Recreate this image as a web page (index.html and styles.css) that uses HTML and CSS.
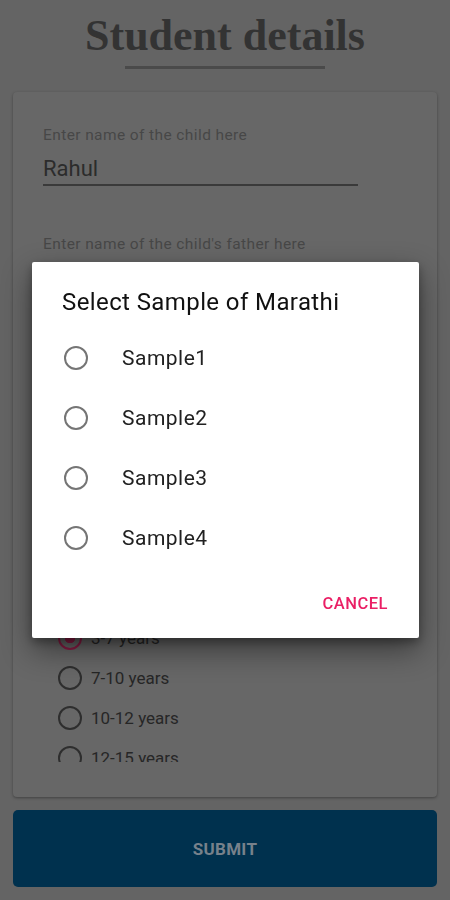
FILE: index.html
```html
<!DOCTYPE html>
<html lang="en">
<head>
    <meta charset="UTF-8">
    <meta name="viewport" content="width=device-width, initial-scale=1.0">
    <title>Student details</title>
    <link rel="stylesheet" href="styles.css">
</head>
<body>

    <div class="page">
        <h1 class="title">Student details</h1>
        <div class="title-line"></div>

        <div class="card">
            <div class="scroll">
                <div class="field">
                    <p class="hint">Enter name of the child here</p>
                    <div class="input">Rahul</div>
                </div>
                <div class="field">
                    <p class="hint">Enter name of the child's father here</p>
                    <div class="input"></div>
                </div>
                <!-- fields hidden behind the dialog -->
                <div class="field blank"><div class="input"></div></div>
                <div class="field blank"><div class="input"></div></div>
                <div class="group-gap"></div>
                <div class="age-list">
                    <div class="age selected"><span class="dot"></span>3-7 years</div>
                    <div class="age"><span class="dot"></span>7-10 years</div>
                    <div class="age"><span class="dot"></span>10-12 years</div>
                    <div class="age"><span class="dot"></span>12-15 years</div>
                </div>
            </div>
        </div>

        <button class="submit">SUBMIT</button>
    </div>

    <!-- sample picker dialog -->
    <div class="dialog">
        <h2 class="dialog-title">Select Sample of Marathi</h2>
        <div class="options">
            <div class="option"><span class="ring"></span>Sample1</div>
            <div class="option"><span class="ring"></span>Sample2</div>
            <div class="option"><span class="ring"></span>Sample3</div>
            <div class="option"><span class="ring"></span>Sample4</div>
        </div>
        <div class="dialog-actions">
            <button class="cancel">CANCEL</button>
        </div>
    </div>

</body>
</html>
```

FILE: styles.css
```css
body {
    margin: 0;
    background-color: #646464;
    font-family: 'Roboto', 'Noto Sans', sans-serif;
}
.page {
    padding: 0 13px;
    height: 900px;
    box-sizing: border-box;
}
.title {
    margin: 0;
    padding-top: 12px;
    height: 48px;
    text-align: center;
    font-family: 'Liberation Serif', serif;
    font-weight: bold;
    font-size: 44px;
    line-height: 48px;
    color: #333;
}
.title-line {
    width: 200px;
    height: 3px;
    margin: 6px auto 0;
    background-color: #4a4a4a;
}
.card {
    margin-top: 23px;
    padding: 35px 0 35px 30px;
    background-color: #676767;
    border-radius: 4px;
    box-shadow: 0 1px 3px rgba(0, 0, 0, 0.35);
}
.scroll {
    height: 635px;
    overflow: hidden;
}
.field {
    height: 109px;
}
.field.blank {
    padding-top: 16px;
    box-sizing: border-box;
}
.hint {
    margin: 0;
    font-size: 15.5px;
    letter-spacing: 0.4px;
    line-height: 16px;
    color: #474747;
}
.input {
    width: 315px;
    height: 26px;
    margin-top: 13px;
    padding-bottom: 2px;
    border-bottom: 2px solid #3a3a3a;
    font-size: 22px;
    line-height: 26px;
    color: #2c2c2c;
}
.group-gap {
    height: 55px;
}
.age {
    display: flex;
    align-items: center;
    height: 40px;
    margin-left: 15px;
    font-size: 17px;
    color: #262626;
}
.dot {
    width: 20px;
    height: 20px;
    margin-right: 9px;
    border: 2px solid #2e2e2e;
    border-radius: 50%;
}
.age.selected .dot {
    border-color: #8c1c45;
    background: radial-gradient(circle, #8c1c45 0 5px, transparent 5.5px);
}
.submit {
    display: block;
    width: 100%;
    height: 77px;
    margin-top: 13px;
    border: none;
    border-radius: 5px;
    background-color: #00314e;
    font-family: 'Roboto', sans-serif;
    font-weight: bold;
    font-size: 17px;
    letter-spacing: 0.3px;
    color: #77818b;
}
/* Dialog */
.dialog {
    position: fixed;
    top: 262px;
    left: 32px;
    width: 387px;
    height: 376px;
    box-sizing: border-box;
    padding: 26px 31px 17px 30px;
    background-color: white;
    border-radius: 2px;
    box-shadow: 0 12px 30px rgba(0, 0, 0, 0.45), 0 4px 10px rgba(0, 0, 0, 0.3);
    display: flex;
    flex-direction: column;
}
.dialog-title {
    margin: 0;
    font-size: 24px;
    font-weight: normal;
    letter-spacing: 0.4px;
    line-height: 28px;
    color: #111;
}
.options {
    margin-top: 12px;
}
.option {
    display: flex;
    align-items: center;
    height: 60px;
    padding-left: 2px;
    font-size: 21px;
    letter-spacing: 0.5px;
    color: #212121;
}
.ring {
    width: 20px;
    height: 20px;
    margin-right: 34px;
    border: 2px solid #757575;
    border-radius: 50%;
}
.dialog-actions {
    margin-top: auto;
    display: flex;
    justify-content: flex-end;
}
.cancel {
    height: 36px;
    padding: 0;
    border: none;
    background: none;
    font-family: 'Roboto', sans-serif;
    font-weight: 500;
    font-size: 16.5px;
    letter-spacing: 0.5px;
    color: #ea1f65;
}
```
